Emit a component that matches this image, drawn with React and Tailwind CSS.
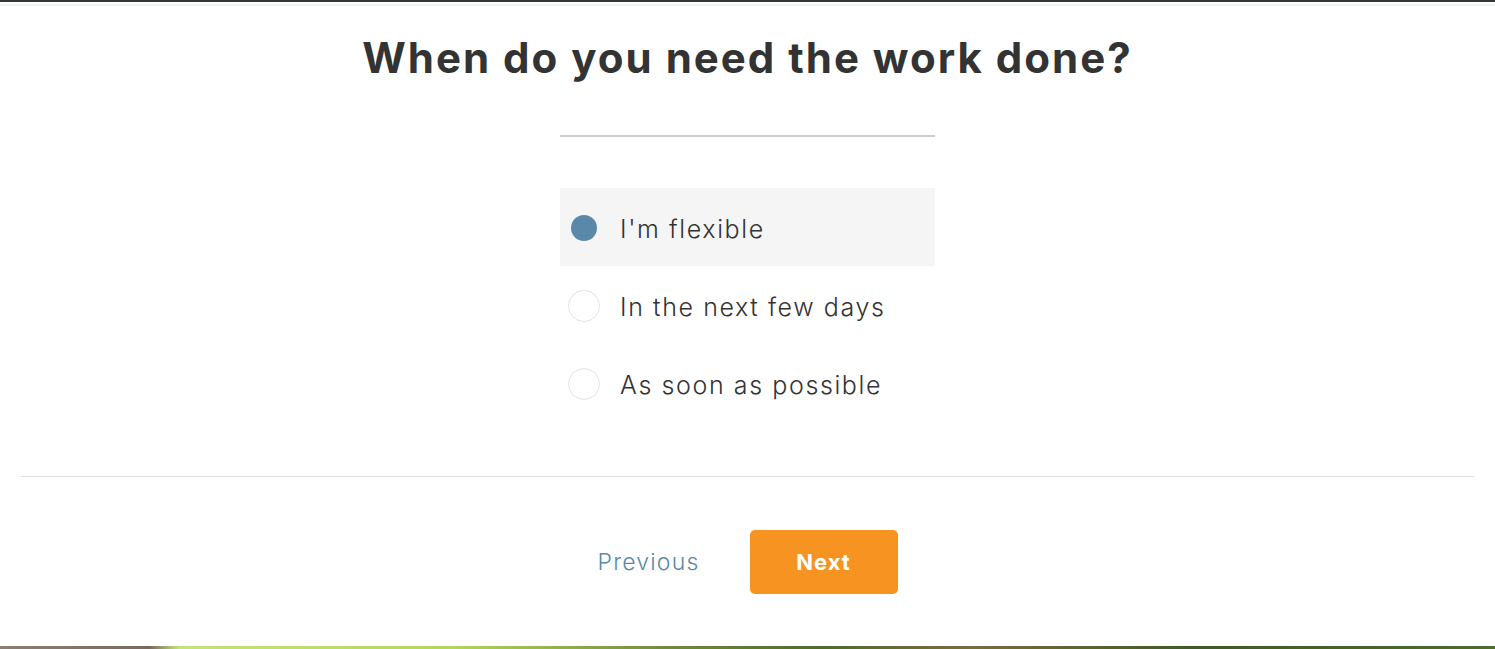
import { useState } from 'react';

const options = ["I'm flexible", 'In the next few days', 'As soon as possible'];

function App() {
    const [selected, setSelected] = useState(0);

    return (
        <div className="min-h-[649px] flex flex-col bg-white font-['Inter',sans-serif] text-[#333333] border-t-[2px] border-[#2f3a35]">
            {/* faint strip under the top bar */}
            <div className="h-[2px] mt-[2px] bg-[#eef5f3]" />

            <h1 className="mt-[27px] text-center text-[42px] leading-[50px] font-bold tracking-[2px]">
                When do you need the work done?
            </h1>

            <div className="w-[375px] mx-auto mt-[52px] h-[2px] bg-[#cccccc]" />

            <div className="w-[375px] mx-auto mt-[51px] flex flex-col">
                {options.map((label, i) => (
                    <button
                        key={label}
                        type="button"
                        onClick={() => setSelected(i)}
                        className={`h-[78px] pt-[2px] flex items-center text-left ${selected === i ? 'bg-[#f5f5f5]' : 'bg-white'}`}
                    >
                        <span className="w-[48px] flex justify-center">
                            {selected === i ? (
                                <span className="w-[26px] h-[26px] rounded-full bg-[#5a88a8]" />
                            ) : (
                                <span className="w-[32px] h-[32px] rounded-full border border-[#e4e4e4]" />
                            )}
                        </span>
                        <span className="ml-[12px] pt-[3px] text-[25px] font-light tracking-[1.6px] text-[#333333]">{label}</span>
                    </button>
                ))}
            </div>

            <div className="mx-[21px] mt-[54px] h-px bg-[#dddddd]" />

            <div className="mt-[53px] flex justify-center items-center gap-[50px]">
                <button type="button" className="text-[23px] font-light tracking-[1.2px] text-[#5a88a8]">
                    Previous
                </button>
                <button
                    type="button"
                    className="w-[148px] h-[64px] rounded-[5px] bg-[#f79421] text-white text-[22px] font-bold tracking-[1px]"
                >
                    Next
                </button>
            </div>

            <div className="flex-1" />
            <div className="h-[3px] bg-[linear-gradient(90deg,#8a8070_0%,#7a6a5c_10%,#c7e27a_12%,#b5d65a_30%,#6f8a3a_45%,#4f6b2c_55%,#7d6b3d_65%,#3f5a26_80%,#4d6d2d_100%)]" />
        </div>
    );
}

export default App;
